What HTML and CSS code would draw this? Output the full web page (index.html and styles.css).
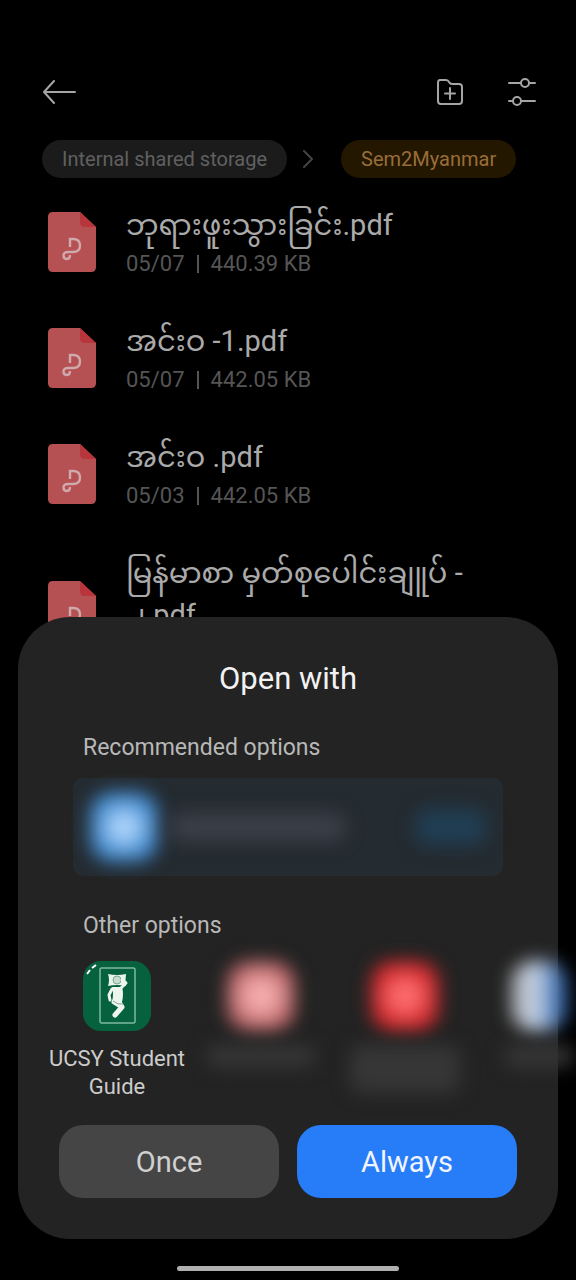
FILE: index.html
```html
<!DOCTYPE html>
<html lang="en">
<head>
<meta charset="utf-8">
<meta name="viewport" content="width=device-width, initial-scale=1">
<title>Open with</title>
<link rel="stylesheet" href="styles.css">
</head>
<body>
<svg class="defs" aria-hidden="true">
  <symbol id="pdf" viewBox="0 0 48 60">
    <path d="M5 0H32L48 15V55Q48 60 43 60H5Q0 60 0 55V5Q0 0 5 0Z" fill="#b65153"/>
    <path d="M32 0L48 15H37Q32 15 32 10Z" fill="#b8353b"/>
    <path d="M22 35V27H25Q32 27 32 33.500Q32 40 25 40H20Q15.500 40 15.500 43.500Q15.500 47 19 47Q22 47 22 43" fill="none" stroke="#cfa9ab" stroke-width="2.400"/>
  </symbol>
</svg>
<div class="screen">
  <header class="toolbar">
    <button class="icon-button" aria-label="Back"><svg width="34" height="24" viewBox="0 0 34 24"><path d="M11 1L1 12L11 23M1 12H32"/></svg></button>
    <div class="actions">
      <button class="icon-button" aria-label="New folder"><svg width="28" height="28" viewBox="0 0 28 28"><path d="M4 2H10Q12 2 13 4Q14 6 16 6H23Q26 6 26 9V23Q26 26 23 26H5Q2 26 2 23V5Q2 2 4 2ZM14 10V21M9 15.500H19"/></svg></button>
      <button class="icon-button" aria-label="View settings"><svg width="28" height="28" viewBox="0 0 28 28"><path d="M1 5H13M21 5H27M1 23H5M13 23H27"/><circle cx="17" cy="5" r="4"/><circle cx="9" cy="23" r="4"/></svg></button>
    </div>
  </header>
  <nav class="crumbs" aria-label="Folders">
    <a class="crumb" href="#">Internal shared storage</a>
    <svg class="chevron" width="10" height="18" viewBox="0 0 10 18"><path d="M1 1L9 9L1 17"/></svg>
    <a class="crumb current" href="#">Sem2Myanmar</a>
  </nav>
  <ul class="files">
    <li class="file"><svg class="file-icon"><use href="#pdf"/></svg><div><div class="name">ဘုရားဖူးသွားခြင်း.pdf</div><div class="meta"><span>05/07</span><i class="bar"></i><span>440.39 KB</span></div></div></li>
    <li class="file"><svg class="file-icon"><use href="#pdf"/></svg><div><div class="name">အင်းဝ -1.pdf</div><div class="meta"><span>05/07</span><i class="bar"></i><span>442.05 KB</span></div></div></li>
    <li class="file"><svg class="file-icon"><use href="#pdf"/></svg><div><div class="name">အင်းဝ .pdf</div><div class="meta"><span>05/03</span><i class="bar"></i><span>442.05 KB</span></div></div></li>
    <li class="file"><svg class="file-icon"><use href="#pdf"/></svg><div><div class="name">မြန်မာစာ မှတ်စုပေါင်းချူပ် -<br>၂.pdf</div><div class="meta"><span>05/03</span></div></div></li>
  </ul>
  <section class="sheet" role="dialog" aria-labelledby="sheet-title">
    <h1 class="title" id="sheet-title">Open with</h1>
    <h2 class="label">Recommended options</h2>
    <div class="recommended"><span class="glow sky"></span><span class="smudge long"></span><span class="smudge action"></span></div>
    <h2 class="label">Other options</h2>
    <div class="apps">
      <button class="app">
        <svg class="app-icon" width="68" height="70" viewBox="0 0 68 70"><rect width="68" height="70" rx="18" fill="#06613f"/><path d="M4 13L7 9M9 7L13 4" stroke="#fff" stroke-width="2"/><rect x="17" y="7" width="35" height="55" rx="1" fill="none" stroke="#b9e5d2"/><path d="M25 13Q34 15 43 13Q42 19 43 25Q34 23 25 25Q27 19 25 13Z" fill="#e9f4ec"/><circle cx="34" cy="19" r="4" fill="#c6ded1" stroke="#7fa893"/><path d="M37 28L43 22L39 19M29 28L26 34L27 39" fill="none" stroke="#eef5ef" stroke-width="3" stroke-linecap="round" stroke-linejoin="round"/><path d="M29 26H39Q41 33 39 41H29Q31 33 29 26Z" fill="#eef5ef"/><path d="M31 41L39 46L32 54M36 41L39 46" fill="none" stroke="#eef5ef" stroke-width="5" stroke-linecap="round" stroke-linejoin="round"/><path d="M30 40Q35 44 40 43" fill="none" stroke="#7fa893"/></svg>
        <span>UCSY Student Guide</span>
      </button>
      <div class="app"><span class="glow rose"></span><span class="smudge"></span></div>
      <div class="app"><span class="glow red"></span><span class="smudge tall"></span></div>
      <div class="app edge"><span class="glow white"></span><span class="smudge short"></span></div>
    </div>
    <div class="choices"><button class="choice">Once</button><button class="choice primary">Always</button></div>
  </section>
  <div class="home-bar"></div>
</div>
</body>
</html>
```
FILE: styles.css
```css
* { box-sizing: border-box; }
body { margin: 0; background: #000; font-family: Roboto, "Noto Sans Myanmar", Padauk, sans-serif; }
button { border: 0; padding: 0; background: none; color: inherit; font: inherit; }
.defs { position: absolute; width: 0; height: 0; }
.screen { position: relative; height: 100vh; min-height: 1000px; overflow: hidden; padding-top: 72px; }
.toolbar { display: flex; justify-content: space-between; align-items: center; height: 40px; padding: 0 40px 0 43px; }
.actions { display: flex; gap: 44px; }
.icon-button { display: flex; }
.icon-button svg, .chevron { fill: none; stroke: #a5a5a5; stroke-width: 2; stroke-linecap: round; stroke-linejoin: round; }
.crumbs { display: flex; align-items: center; padding: 28px 42px 0; }
.crumb { height: 38px; padding: 0 20px; border-radius: 19px; background: #1b1b1b; color: #606060; font-size: 20px; line-height: 38px; text-decoration: none; white-space: nowrap; }
.current { background: #231700; color: #9a6d38; }
.crumbs .chevron { margin: 0 28px 0 16px; stroke: #444; }
.files { margin: 0; padding: 6px 48px 0; list-style: none; }
.file { display: flex; align-items: center; gap: 30px; padding: 20px 0; }
.file-icon { width: 48px; height: 60px; flex: none; }
.name { color: #aaa; font-size: 29px; line-height: 42px; white-space: nowrap; }
.meta { display: flex; align-items: center; gap: 12px; padding-top: 2px; color: #555; font-size: 22px; line-height: 32px; }
.bar { width: 2px; height: 18px; background: #555; }
.sheet { position: absolute; left: 18px; right: 18px; bottom: 41px; padding: 40px 41px 41px; border-radius: 52px; background: #232323; }
.title { margin: 0 0 32px; color: #f2f2f2; font-size: 31px; font-weight: 400; line-height: 44px; text-align: center; }
.label { margin: 0 24px; color: #b8b8b8; font-size: 23px; font-weight: 400; line-height: 30px; }
.recommended { display: flex; align-items: center; height: 98px; margin: 15px 14px 35px; padding: 0 17px; border-radius: 10px; background: #242b31; }
.glow { display: block; flex: none; width: 68px; height: 70px; border-radius: 22px; filter: blur(9px); }
.smudge { display: block; width: 110px; height: 22px; border-radius: 11px; background: #363636; filter: blur(9px); }
.sky { background: radial-gradient(circle, #b4d9ff 15%, #3c86cb 65%); }
.long { width: 175px; height: 28px; margin: 0 auto 0 12px; background: #3b3f48; }
.action { width: 70px; height: 36px; background: #203e53; }
.apps { display: flex; gap: 4px; height: 184px; padding-top: 20px; margin-left: -12px; margin-right: -41px; }
.app { display: flex; flex: none; flex-direction: column; align-items: center; gap: 14px; width: 140px; color: #ccc; font-size: 22px; line-height: 28px; }
.edge { width: 120px; }
.app-icon { flex: none; }
.rose { background: radial-gradient(circle, #f8b0b0 20%, #b05a5c 75%); }
.red { background: radial-gradient(circle, #ff7070 20%, #ce2529 65%); }
.white { background: linear-gradient(90deg, #aaa, #c6d5e9 45%, #2e60a7 90%); width: 56px; }
.tall { height: 48px; }
.short { width: 70px; }
.choices { display: flex; gap: 18px; }
.choice { flex: 1; height: 73px; border-radius: 24px; background: #454545; color: #d0d0d0; font-size: 29px; }
.primary { background: #277cf8; color: #f2f5ff; }
.home-bar { position: absolute; left: 50%; bottom: 9px; width: 222px; height: 5px; margin-left: -111px; border-radius: 3px; background: #b0b0b0; }
```
